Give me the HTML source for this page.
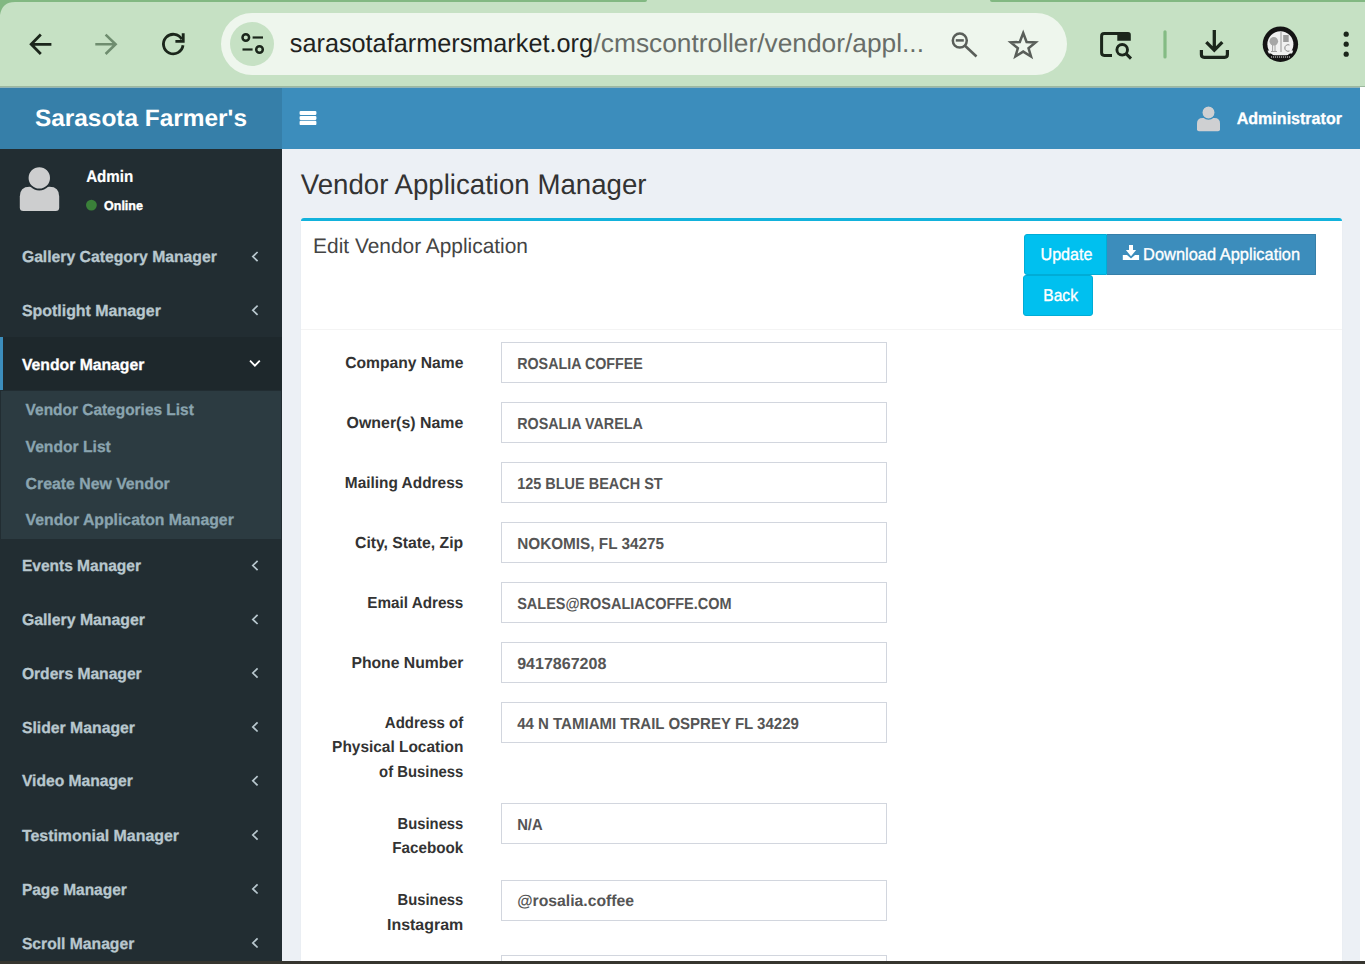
<!DOCTYPE html>
<html><head><meta charset="utf-8"><title>Vendor Application Manager</title>
<style>
html,body{margin:0;padding:0;width:1365px;height:964px;overflow:hidden;background:#fff;}
body{position:relative;font-family:"Liberation Sans",sans-serif;text-rendering:geometricPrecision;}
</style></head><body>
<div style="position:absolute;left:0px;top:0px;width:1365px;height:87px;background:#c6e1c4;"></div><div style="position:absolute;left:0px;top:0px;width:647px;height:2px;background:#82b882;border-bottom-right-radius:3px;"></div><svg style="position:absolute;left:0;top:0" width="20" height="20"><path d="M0 0H20V2H15Q2 2 0 15Z" fill="#82b882"/></svg><div style="position:absolute;left:990px;top:0px;width:375px;height:2px;background:#82b882;border-bottom-left-radius:3px;"></div><div style="position:absolute;left:0px;top:86px;width:1365px;height:1px;background:#9db99f;"></div><div style="position:absolute;left:0px;top:87px;width:1365px;height:1px;background:#93b5b6;"></div><div style="position:absolute;left:221px;top:13.3px;width:846px;height:61.5px;background:#eef6ed;border-radius:31px;"></div><div style="position:absolute;left:230px;top:22px;width:44px;height:44px;border-radius:50%;background:#c6e1c4"></div><svg style="position:absolute;left:0;top:0" width="1365" height="87" viewBox="0 0 1365 87">
<g fill="none" stroke-linecap="butt">
 <path d="M51.4 44.3H32M40.8 34.6L31.2 44.3L40.8 54" stroke="#1b261b" stroke-width="2.8"/>
 <path d="M95.3 44.3H115M105.6 34.6L115.6 44.3L105.6 54" stroke="#6f8d6f" stroke-width="2.6"/>
 <path d="M183 45.3A9.8 9.8 0 1 1 181.8 39.2" stroke="#1b261b" stroke-width="2.8"/>
 <path d="M183.2 33.2V41.4H175.4" stroke="#1b261b" stroke-width="2.9" stroke-linejoin="miter"/>
 <circle cx="245.8" cy="37.5" r="3.3" stroke="#1b261b" stroke-width="2.5"/>
 <path d="M252.6 37.5H263" stroke="#1b261b" stroke-width="2.2"/>
 <circle cx="259.5" cy="49.5" r="3.3" stroke="#1b261b" stroke-width="2.5"/>
 <path d="M242.5 49.5H252.6" stroke="#1b261b" stroke-width="2.2"/>
 <circle cx="959.8" cy="40.6" r="7" stroke="#595e59" stroke-width="2.5"/>
 <path d="M955.8 40.4H963.8" stroke="#595e59" stroke-width="2.5"/>
 <path d="M965 45.8L976.5 56.5" stroke="#595e59" stroke-width="2.6"/>
 <path d="M1023.2 33L1026.6 42L1035.6 42.4L1028.5 48.2L1031 56.5L1023.2 51.6L1015.4 56.5L1017.9 48.2L1010.8 42.4L1019.8 42Z" stroke="#595e59" stroke-width="2.5" stroke-linejoin="miter"/>
 <path d="M1112 55.4H1104.2Q1101.6 55.4 1101.6 52.8V36.3Q1101.6 33.6 1104.2 33.6H1120" stroke="#1b261b" stroke-width="3"/>
 <circle cx="1122.2" cy="49.8" r="5.3" stroke="#1b261b" stroke-width="2.9"/>
 <path d="M1126 53.6L1131 58.6" stroke="#1b261b" stroke-width="3"/>
 <path d="M1165 31.8V57" stroke="#84bb84" stroke-width="3.2" stroke-linecap="round"/>
 <path d="M1214.3 30V49.5M1206.3 42.2L1214.3 50.2L1222.3 42.2" stroke="#1b261b" stroke-width="3.3"/>
 <path d="M1201.4 50.1V54.5Q1201.4 57.3 1204.2 57.3H1224.6Q1227.4 57.3 1227.4 54.5V50.1" stroke="#1b261b" stroke-width="3.2"/>
</g>
<path d="M1117.3 32H1128Q1130.8 32 1130.8 34.8V40.8H1117.3Z" fill="#1b261b"/>
<circle cx="1346.2" cy="34.2" r="2.6" fill="#1b261b"/>
<circle cx="1346.2" cy="44.2" r="2.6" fill="#1b261b"/>
<circle cx="1346.2" cy="54.2" r="2.6" fill="#1b261b"/>
<circle cx="1280.4" cy="44.2" r="17.7" fill="#141414"/>
<circle cx="1280.4" cy="44.2" r="13" fill="#f0f0f0"/>
<path d="M1267.6 50.5H1293.2A13 13 0 0 1 1292 53.6H1268.8A13 13 0 0 1 1267.6 50.5Z" fill="#f0f0f0"/>
<path d="M1268.5 55.2H1292.3V56.2Q1287 60 1280.4 60Q1273.8 60 1268.5 56.2Z" fill="#141414"/>
<path d="M1271 57H1290" stroke="#e8e8e8" stroke-width="1.1" stroke-dasharray="1.1 0.9"/>
<path d="M1281 32V52" stroke="#8a8a8a" stroke-width="0.9"/>
<rect x="1283.2" y="35" width="5.5" height="7" fill="#9a9a9a"/>
<circle cx="1273.8" cy="41.2" r="4.3" fill="#a5a5a5"/>
<path d="M1272.6 45V51M1275 45V51M1271 51.5H1277" stroke="#999" stroke-width="0.9"/>
<path d="M1289.5 45A3.3 3.3 0 1 0 1289.5 51" fill="none" stroke="#888" stroke-width="1"/>
</svg><div style="position:absolute;left:0px;top:88px;width:282px;height:61px;background:#367fa9;"></div><div style="position:absolute;left:282px;top:88px;width:1078px;height:61px;background:#3c8dbc;"></div><div style="position:absolute;left:1360px;top:87px;width:5px;height:874px;background:#ffffff;"></div><div style="position:absolute;left:0px;top:149px;width:282px;height:812px;background:#222d32;"></div><div style="position:absolute;left:282px;top:149px;width:1078px;height:812px;background:#ecf0f5;"></div><svg style="position:absolute;left:0;top:87px" width="1365" height="62"><rect x="299.6" y="23.9" width="16.8" height="4.1" rx="1.2" fill="#fff"/><rect x="299.6" y="28.9" width="16.8" height="4.1" rx="1.2" fill="#fff"/><rect x="299.6" y="33.8" width="16.8" height="4.3" rx="1.2" fill="#fff"/><path d="M1197 42.3V36.5Q1197 31 1202.5 31H1214.5Q1220 31 1220 36.5V42.3Q1220 44.3 1218 44.3H1199Q1197 44.3 1197 42.3Z" fill="#cfd0d2"/><circle cx="1208.5" cy="25.6" r="6.6" fill="#cfd0d2" stroke="#3c8dbc" stroke-width="1.2"/></svg><svg style="position:absolute;left:0;top:149px" width="282" height="80"><path d="M19.8 58.5V47.5Q19.8 37.7 29.5 37.7H49.5Q59.2 37.7 59.2 47.5V58.5Q59.2 62 55.7 62H23.3Q19.8 62 19.8 58.5Z" fill="#cdcecf"/><circle cx="39.3" cy="28.9" r="11.6" fill="#cdcecf" stroke="#222d32" stroke-width="1.8"/><circle cx="91.4" cy="56.1" r="5.4" fill="#3a8039"/></svg><div style="position:absolute;left:0px;top:336.8px;width:282px;height:53.7px;background:#1e282c;"></div><div style="position:absolute;left:0px;top:336.8px;width:3px;height:53.7px;background:#3c8dbc;"></div><div style="position:absolute;left:1px;top:390.5px;width:280px;height:148.6px;background:#2c3b41;"></div><svg style="position:absolute;left:0;top:0" width="282" height="964"><path d="M257.6 252.0L252.8 256.59999999999997L257.6 261.2" stroke="#b8c7ce" stroke-width="1.7" fill="none"/><path d="M257.6 305.7L252.8 310.29999999999995L257.6 314.9" stroke="#b8c7ce" stroke-width="1.7" fill="none"/><path d="M250 360.6L254.9 365.6L259.8 360.6" stroke="#fff" stroke-width="1.8" fill="none"/><path d="M257.6 560.9L252.8 565.5L257.6 570.1" stroke="#b8c7ce" stroke-width="1.7" fill="none"/><path d="M257.6 614.8L252.8 619.4L257.6 624" stroke="#b8c7ce" stroke-width="1.7" fill="none"/><path d="M257.6 668.4L252.8 673.0L257.6 677.6" stroke="#b8c7ce" stroke-width="1.7" fill="none"/><path d="M257.6 722.3L252.8 726.9L257.6 731.5" stroke="#b8c7ce" stroke-width="1.7" fill="none"/><path d="M257.6 776.1999999999999L252.8 780.8L257.6 785.4" stroke="#b8c7ce" stroke-width="1.7" fill="none"/><path d="M257.6 830.4L252.8 835.0L257.6 839.6" stroke="#b8c7ce" stroke-width="1.7" fill="none"/><path d="M257.6 884.3L252.8 888.9L257.6 893.5" stroke="#b8c7ce" stroke-width="1.7" fill="none"/><path d="M257.6 938.3L252.8 942.9L257.6 947.5" stroke="#b8c7ce" stroke-width="1.7" fill="none"/></svg><div style="position:absolute;left:301px;top:218px;width:1041px;height:760px;background:#fff;border-top:3px solid #12b2dc;border-radius:3px;box-shadow:0 1px 1px rgba(0,0,0,0.1);box-sizing:border-box"></div><div style="position:absolute;left:301px;top:329px;width:1041px;height:1px;background:#f4f4f4;"></div><div style="position:absolute;left:1024px;top:234px;width:83.3px;height:40.7px;background:#00c0ef;border:1px solid #00acd6;box-sizing:border-box;border-radius:3px 0 0 3px;"></div><div style="position:absolute;left:1107.3px;top:234px;width:208.6px;height:40.7px;background:#3c8dbc;border:1px solid #367fa9;border-left:none;box-sizing:border-box;border-radius:0 1px 1px 0;"></div><div style="position:absolute;left:1023px;top:275.3px;width:69.7px;height:40.5px;background:#00c0ef;border:1px solid #00acd6;box-sizing:border-box;border-radius:3px;"></div><svg style="position:absolute;left:1122px;top:245px" width="18" height="18"><path d="M7 0H11V5H14.1L9 11.3L3.9 5H7Z" fill="#fff"/><path d="M0.8 10.1H5L9 13.6L13 10.1H17.1V15.1H0.8Z" fill="#fff"/></svg><div style="position:absolute;left:501.2px;top:342.2px;width:385.6px;height:41.2px;border:1px solid #d2d6de;box-sizing:border-box;background:#fff"></div><div style="position:absolute;left:501.2px;top:402.2px;width:385.6px;height:41.2px;border:1px solid #d2d6de;box-sizing:border-box;background:#fff"></div><div style="position:absolute;left:501.2px;top:462.2px;width:385.6px;height:41.2px;border:1px solid #d2d6de;box-sizing:border-box;background:#fff"></div><div style="position:absolute;left:501.2px;top:522.2px;width:385.6px;height:41.2px;border:1px solid #d2d6de;box-sizing:border-box;background:#fff"></div><div style="position:absolute;left:501.2px;top:582.2px;width:385.6px;height:41.2px;border:1px solid #d2d6de;box-sizing:border-box;background:#fff"></div><div style="position:absolute;left:501.2px;top:642.2px;width:385.6px;height:41.2px;border:1px solid #d2d6de;box-sizing:border-box;background:#fff"></div><div style="position:absolute;left:501.2px;top:702.2px;width:385.6px;height:41.2px;border:1px solid #d2d6de;box-sizing:border-box;background:#fff"></div><div style="position:absolute;left:501.2px;top:803.2px;width:385.6px;height:41.2px;border:1px solid #d2d6de;box-sizing:border-box;background:#fff"></div><div style="position:absolute;left:501.2px;top:879.7px;width:385.6px;height:41.2px;border:1px solid #d2d6de;box-sizing:border-box;background:#fff"></div><div style="position:absolute;left:501.2px;top:955px;width:385.6px;height:41.2px;border:1px solid #d2d6de;box-sizing:border-box;background:#fff"></div><svg style="position:absolute;left:0;top:0" width="1365" height="964" font-family="Liberation Sans"><text x="289.80" y="52.40" font-size="26" font-weight="400" fill="#1f231f" textLength="303.19" lengthAdjust="spacingAndGlyphs">sarasotafarmersmarket.org</text><text x="593.50" y="52.40" font-size="26" font-weight="400" fill="#686d68" textLength="330.48" lengthAdjust="spacingAndGlyphs">/cmscontroller/vendor/appl...</text><text x="34.90" y="126.40" font-size="23.8" font-weight="700" fill="#fff" textLength="212.09" lengthAdjust="spacingAndGlyphs">Sarasota Farmer&#x27;s</text><text x="1236.70" y="123.70" font-size="16.6" font-weight="700" fill="#fff" stroke="#fff" stroke-width="0.3" textLength="105.26" lengthAdjust="spacingAndGlyphs">Administrator</text><text x="86.20" y="182.00" font-size="16.6" font-weight="700" fill="#fff" stroke="#fff" stroke-width="0.2" textLength="47.11" lengthAdjust="spacingAndGlyphs">Admin</text><text x="104.00" y="209.80" font-size="12.8" font-weight="700" fill="#fff" stroke="#fff" stroke-width="0.4" textLength="38.95" lengthAdjust="spacingAndGlyphs">Online</text><text x="21.90" y="262.20" font-size="16" font-weight="700" fill="#b8c7ce" stroke="#b8c7ce" stroke-width="0.3" textLength="194.95" lengthAdjust="spacingAndGlyphs">Gallery Category Manager</text><text x="21.90" y="315.90" font-size="16" font-weight="700" fill="#b8c7ce" stroke="#b8c7ce" stroke-width="0.3" textLength="138.95" lengthAdjust="spacingAndGlyphs">Spotlight Manager</text><text x="21.90" y="369.60" font-size="16" font-weight="700" fill="#fff" stroke="#fff" stroke-width="0.3" textLength="122.48" lengthAdjust="spacingAndGlyphs">Vendor Manager</text><text x="21.90" y="571.10" font-size="16" font-weight="700" fill="#b8c7ce" stroke="#b8c7ce" stroke-width="0.3" textLength="119.06" lengthAdjust="spacingAndGlyphs">Events Manager</text><text x="21.90" y="625.00" font-size="16" font-weight="700" fill="#b8c7ce" stroke="#b8c7ce" stroke-width="0.3" textLength="123.00" lengthAdjust="spacingAndGlyphs">Gallery Manager</text><text x="21.90" y="678.60" font-size="16" font-weight="700" fill="#b8c7ce" stroke="#b8c7ce" stroke-width="0.3" textLength="119.76" lengthAdjust="spacingAndGlyphs">Orders Manager</text><text x="21.90" y="732.50" font-size="16" font-weight="700" fill="#b8c7ce" stroke="#b8c7ce" stroke-width="0.3" textLength="113.05" lengthAdjust="spacingAndGlyphs">Slider Manager</text><text x="21.90" y="786.40" font-size="16" font-weight="700" fill="#b8c7ce" stroke="#b8c7ce" stroke-width="0.3" textLength="111.02" lengthAdjust="spacingAndGlyphs">Video Manager</text><text x="21.90" y="840.60" font-size="16" font-weight="700" fill="#b8c7ce" stroke="#b8c7ce" stroke-width="0.3" textLength="157.16" lengthAdjust="spacingAndGlyphs">Testimonial Manager</text><text x="21.90" y="894.50" font-size="16" font-weight="700" fill="#b8c7ce" stroke="#b8c7ce" stroke-width="0.3" textLength="104.88" lengthAdjust="spacingAndGlyphs">Page Manager</text><text x="21.90" y="948.50" font-size="16" font-weight="700" fill="#b8c7ce" stroke="#b8c7ce" stroke-width="0.3" textLength="112.35" lengthAdjust="spacingAndGlyphs">Scroll Manager</text><text x="25.60" y="414.90" font-size="16" font-weight="700" fill="#8aa4af" stroke="#8aa4af" stroke-width="0.3" textLength="168.22" lengthAdjust="spacingAndGlyphs">Vendor Categories List</text><text x="25.60" y="451.80" font-size="16" font-weight="700" fill="#8aa4af" stroke="#8aa4af" stroke-width="0.3" textLength="85.20" lengthAdjust="spacingAndGlyphs">Vendor List</text><text x="25.60" y="488.70" font-size="16" font-weight="700" fill="#8aa4af" stroke="#8aa4af" stroke-width="0.3" textLength="144.15" lengthAdjust="spacingAndGlyphs">Create New Vendor</text><text x="25.60" y="524.60" font-size="16" font-weight="700" fill="#8aa4af" stroke="#8aa4af" stroke-width="0.3" textLength="208.19" lengthAdjust="spacingAndGlyphs">Vendor Applicaton Manager</text><text x="300.80" y="194.20" font-size="28.3" font-weight="400" fill="#333" textLength="345.69" lengthAdjust="spacingAndGlyphs">Vendor Application Manager</text><text x="313.10" y="252.80" font-size="21" font-weight="400" fill="#444" textLength="214.90" lengthAdjust="spacingAndGlyphs">Edit Vendor Application</text><text x="1040.50" y="260.20" font-size="17" font-weight="400" fill="#fff" stroke="#fff" stroke-width="0.35" textLength="51.95" lengthAdjust="spacingAndGlyphs">Update</text><text x="1143.10" y="260.20" font-size="17" font-weight="400" fill="#fff" stroke="#fff" stroke-width="0.35" textLength="157.04" lengthAdjust="spacingAndGlyphs">Download Application</text><text x="1043.30" y="301.20" font-size="17" font-weight="400" fill="#fff" stroke="#fff" stroke-width="0.35" textLength="34.63" lengthAdjust="spacingAndGlyphs">Back</text><text x="345.20" y="367.90" font-size="16" font-weight="700" fill="#333" textLength="118.15" lengthAdjust="spacingAndGlyphs">Company Name</text><text x="517.20" y="368.80" font-size="16" font-weight="700" fill="#555" textLength="125.69" lengthAdjust="spacingAndGlyphs">ROSALIA COFFEE</text><text x="346.60" y="427.90" font-size="16" font-weight="700" fill="#333" textLength="116.69" lengthAdjust="spacingAndGlyphs">Owner(s) Name</text><text x="517.20" y="428.80" font-size="16" font-weight="700" fill="#555" textLength="125.65" lengthAdjust="spacingAndGlyphs">ROSALIA VARELA</text><text x="344.80" y="487.90" font-size="16" font-weight="700" fill="#333" textLength="118.48" lengthAdjust="spacingAndGlyphs">Mailing Address</text><text x="517.20" y="488.80" font-size="16" font-weight="700" fill="#555" textLength="145.44" lengthAdjust="spacingAndGlyphs">125 BLUE BEACH ST</text><text x="355.00" y="547.90" font-size="16" font-weight="700" fill="#333" textLength="108.24" lengthAdjust="spacingAndGlyphs">City, State, Zip</text><text x="517.20" y="548.80" font-size="16" font-weight="700" fill="#555" textLength="146.83" lengthAdjust="spacingAndGlyphs">NOKOMIS, FL 34275</text><text x="367.30" y="607.90" font-size="16" font-weight="700" fill="#333" textLength="96.04" lengthAdjust="spacingAndGlyphs">Email Adress</text><text x="517.20" y="608.80" font-size="16" font-weight="700" fill="#555" textLength="214.34" lengthAdjust="spacingAndGlyphs">SALES@ROSALIACOFFE.COM</text><text x="351.40" y="667.90" font-size="16" font-weight="700" fill="#333" textLength="111.94" lengthAdjust="spacingAndGlyphs">Phone Number</text><text x="517.20" y="668.80" font-size="16" font-weight="700" fill="#555" textLength="89.18" lengthAdjust="spacingAndGlyphs">9417867208</text><text x="384.80" y="727.90" font-size="16" font-weight="700" fill="#333" textLength="78.45" lengthAdjust="spacingAndGlyphs">Address of</text><text x="332.10" y="752.40" font-size="16" font-weight="700" fill="#333" textLength="131.24" lengthAdjust="spacingAndGlyphs">Physical Location</text><text x="379.10" y="776.90" font-size="16" font-weight="700" fill="#333" textLength="84.14" lengthAdjust="spacingAndGlyphs">of Business</text><text x="517.20" y="728.80" font-size="16" font-weight="700" fill="#555" textLength="281.68" lengthAdjust="spacingAndGlyphs">44 N TAMIAMI TRAIL OSPREY FL 34229</text><text x="397.60" y="828.90" font-size="16" font-weight="700" fill="#333" textLength="65.71" lengthAdjust="spacingAndGlyphs">Business</text><text x="392.30" y="853.40" font-size="16" font-weight="700" fill="#333" textLength="70.94" lengthAdjust="spacingAndGlyphs">Facebook</text><text x="517.20" y="829.80" font-size="16" font-weight="700" fill="#555" textLength="25.45" lengthAdjust="spacingAndGlyphs">N/A</text><text x="397.60" y="905.40" font-size="16" font-weight="700" fill="#333" textLength="65.71" lengthAdjust="spacingAndGlyphs">Business</text><text x="387.00" y="929.90" font-size="16" font-weight="700" fill="#333" textLength="76.27" lengthAdjust="spacingAndGlyphs">Instagram</text><text x="517.20" y="906.30" font-size="16" font-weight="700" fill="#555" textLength="116.81" lengthAdjust="spacingAndGlyphs">@rosalia.coffee</text></svg><div style="position:absolute;left:0px;top:961.4px;width:1365px;height:2.6px;background:#36352f;"></div>
</body></html>
